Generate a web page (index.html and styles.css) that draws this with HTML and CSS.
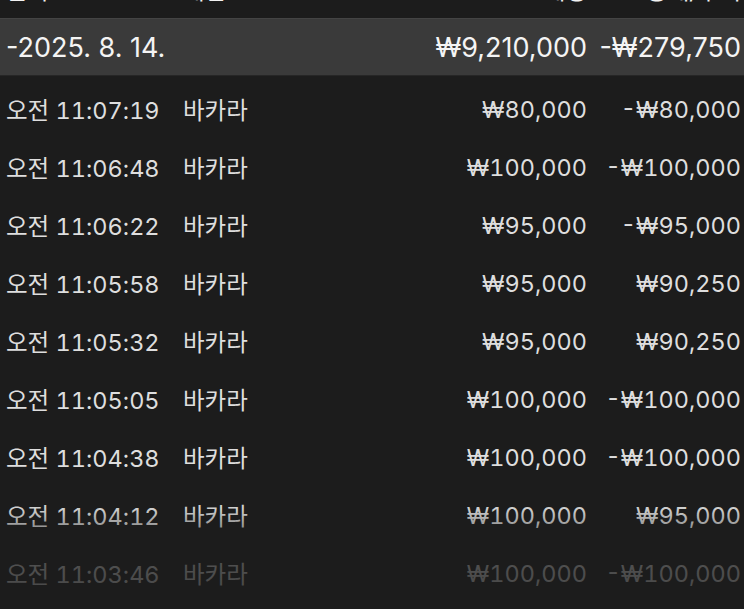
FILE: index.html
```html
<!DOCTYPE html>
<html lang="ko">
<head>
<meta charset="utf-8">
<title>베팅 내역</title>
<link rel="stylesheet" href="styles.css">
</head>
<body>
<div class="table">
  <div class="row head">
    <span class="c-time">날짜</span>
    <span class="c-game">게임</span>
    <span class="c-amt">베팅</span>
    <span class="c-pl">승패/수익</span>
  </div>
  <div class="row day">
    <span class="c-date">-2025. 8. 14.</span>
    <span class="c-amt">₩9,210,000</span>
    <span class="c-pl">-₩279,750</span>
  </div>
  <div class="list">
    <div class="row"><span class="c-time">오전 11:07:19</span><span class="c-game">바카라</span><span class="c-amt">₩80,000</span><span class="c-pl">-₩80,000</span></div>
    <div class="row"><span class="c-time">오전 11:06:48</span><span class="c-game">바카라</span><span class="c-amt">₩100,000</span><span class="c-pl">-₩100,000</span></div>
    <div class="row"><span class="c-time">오전 11:06:22</span><span class="c-game">바카라</span><span class="c-amt">₩95,000</span><span class="c-pl">-₩95,000</span></div>
    <div class="row"><span class="c-time">오전 11:05:58</span><span class="c-game">바카라</span><span class="c-amt">₩95,000</span><span class="c-pl">₩90,250</span></div>
    <div class="row"><span class="c-time">오전 11:05:32</span><span class="c-game">바카라</span><span class="c-amt">₩95,000</span><span class="c-pl">₩90,250</span></div>
    <div class="row"><span class="c-time">오전 11:05:05</span><span class="c-game">바카라</span><span class="c-amt">₩100,000</span><span class="c-pl">-₩100,000</span></div>
    <div class="row"><span class="c-time">오전 11:04:38</span><span class="c-game">바카라</span><span class="c-amt">₩100,000</span><span class="c-pl">-₩100,000</span></div>
    <div class="row"><span class="c-time">오전 11:04:12</span><span class="c-game">바카라</span><span class="c-amt">₩100,000</span><span class="c-pl">₩95,000</span></div>
    <div class="row"><span class="c-time">오전 11:03:46</span><span class="c-game">바카라</span><span class="c-amt">₩100,000</span><span class="c-pl">-₩100,000</span></div>
    <div class="fade"></div>
  </div>
</div>
</body>
</html>
```
FILE: styles.css
```css
html, body {
  margin: 0;
  padding: 0;
  background: #1c1c1c;
  height: 100%;
  overflow: hidden;
}
body {
  font-family: Inter, "Noto Sans CJK KR", sans-serif;
  color: #dedede;
  font-size: 23.5px;
  font-feature-settings: "tnum" 1;
}
.table {
  display: flex;
  flex-direction: column;
}
.row {
  display: grid;
  grid-template-columns: 177px 1fr 160px 154px;
  align-items: center;
  height: 58px;
  padding: 0 3px 0 6px;
  white-space: nowrap;
}
.c-amt, .c-pl {
  text-align: right;
}
.head {
  box-sizing: border-box;
  height: 40px;
  margin-top: -22px;
  padding-bottom: 15px;
  align-items: end;
  color: #f2f2f2;
}
.head span {
  line-height: 24px;
}
.day {
  background: #3a3a3a;
  color: #f4f4f4;
  font-size: 27px;
  font-feature-settings: normal;
  border-top: 1px solid #444;
  border-bottom: 1px solid #262626;
  height: 56px;
}
.c-date {
  grid-column: 1 / 3;
}
.list {
  position: relative;
  padding-top: 4px;
}
.fade {
  position: absolute;
  left: 0;
  right: 0;
  bottom: 0;
  height: 140px;
  background: linear-gradient(to bottom, rgba(28,28,28,0) 0%, rgba(28,28,28,0.08) 33%, rgba(28,28,28,0.72) 62%, rgba(28,28,28,0.78) 100%);
  pointer-events: none;
}
```
